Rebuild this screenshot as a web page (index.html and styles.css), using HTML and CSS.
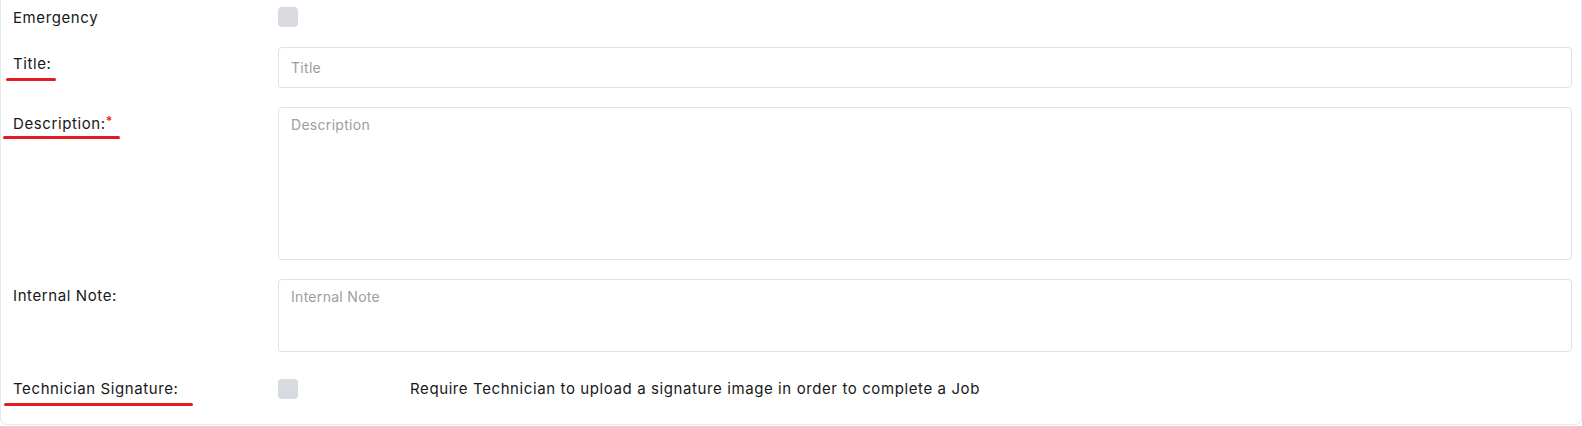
FILE: index.html
```html
<!DOCTYPE html>
<html lang="en">
<head>
<meta charset="utf-8">
<title>Job form</title>
<link rel="stylesheet" href="styles.css">
</head>
<body>
<div class="card">
  <div class="row row-check">
    <label class="label">Emergency</label>
    <div class="control"><span class="checkbox"></span></div>
  </div>
  <div class="row">
    <label class="label label-field">Title:<span class="mark mark-title"></span></label>
    <div class="control"><input class="input" type="text" placeholder="Title"></div>
  </div>
  <div class="row">
    <label class="label label-field">Description:<sup class="req">*</sup><span class="mark mark-desc"></span></label>
    <div class="control"><textarea class="input textarea textarea-lg" placeholder="Description"></textarea></div>
  </div>
  <div class="row">
    <label class="label label-field">Internal Note:</label>
    <div class="control"><textarea class="input textarea textarea-sm" placeholder="Internal Note"></textarea></div>
  </div>
  <div class="row row-check row-last">
    <label class="label">Technician Signature:<span class="mark mark-tech"></span></label>
    <div class="control control-inline">
      <span class="checkbox"></span>
      <span class="hint">Require Technician to upload a signature image in order to complete a Job</span>
    </div>
  </div>
</div>
</body>
</html>
```

FILE: styles.css
```css
* { box-sizing: border-box; }

html, body {
  margin: 0;
  padding: 0;
  background: #ffffff;
}

body {
  font-family: Inter, "Open Sans", sans-serif;
  font-size: 15px;
  letter-spacing: 0.6px;
  color: #161819;
  width: 1582px;
  height: 426px;
  overflow: hidden;
}

.card {
  width: 1582px;
  background: #ffffff;
  border: 1px solid #e6e8eb;
  border-top: 0;
  border-radius: 0 0 7px 7px;
  padding: 7px 9px 25px 12px;
}

.row {
  display: flex;
  align-items: flex-start;
  margin-bottom: 19px;
}

.row-last {
  margin-top: 26px;
  margin-bottom: 0;
}

.label {
  position: relative;
  flex: 0 0 265px;
  line-height: 21px;
  white-space: nowrap;
}

.label-tech { letter-spacing: 0.75px; }

.label-field { padding-top: 6px; }

.req {
  color: #ee2222;
  font-size: 12px;
  font-weight: 700;
  vertical-align: 0;
  position: relative;
  top: -4px;
  margin-left: 0;
}

.mark {
  position: absolute;
  height: 3px;
  background: #e11d23;
  border-radius: 2px;
}

.mark-title { left: -7px; top: 31px; width: 50px; }
.mark-desc { left: -10px; top: 29px; width: 117px; }
.mark-tech { left: -9px; top: 25px; width: 189px; }

.control {
  flex: 1 1 auto;
  min-width: 0;
}

.control-inline {
  display: flex;
  align-items: center;
}

.checkbox {
  display: block;
  width: 20px;
  height: 20px;
  border-radius: 4px;
  background: #d7dbdf;
  flex: 0 0 20px;
}

.hint {
  margin-left: 112px;
  line-height: 21px;
}

.input {
  display: block;
  width: 100%;
  height: 41px;
  border: 1px solid #dfe2e6;
  border-radius: 4px;
  padding: 0 12px;
  font-family: inherit;
  font-size: 14px;
  letter-spacing: 0.3px;
  color: #212529;
  background: #ffffff;
  outline: none;
}

.input::placeholder { color: #9a9ea3; }

.textarea {
  resize: none;
  padding: 6px 12px;
  line-height: 21px;
}

.textarea-lg { height: 153px; }
.textarea-sm { height: 73px; }
```
